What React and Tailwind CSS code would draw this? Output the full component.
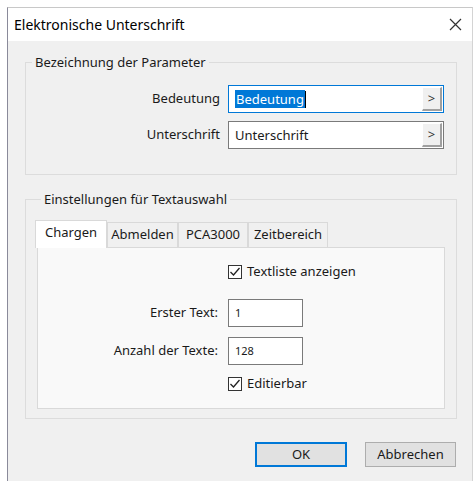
import { useState } from 'react';

const font = { fontFamily: '"Noto Sans", "Open Sans", sans-serif' };

function Check() {
  return (
    <span className="w-[14px] h-[14px] border border-[#333] bg-white flex items-center justify-center">
      <svg width="12" height="12" viewBox="0 0 12 12">
        <polyline points="1.5,6 4.5,9 10.5,2" fill="none" stroke="#222" strokeWidth="1.3" />
      </svg>
    </span>
  );
}

function PickField({ value, focused }) {
  return (
    <div className={`w-[216px] h-[28px] bg-white flex items-center pl-[6px] pr-[1px] border ${focused ? 'border-[#0078d7]' : 'border-[#7a7a7a]'}`}>
      <div className="flex-1 flex items-center">
        {focused ? (
          <>
            <span className="bg-[#0078d7] text-white leading-[18px] px-[1px]">{value}</span>
            <span className="w-px h-[17px] bg-black" />
          </>
        ) : (
          <span className="leading-[18px]">{value}</span>
        )}
      </div>
      <span className="w-[20px] h-[24px] bg-[#f0f0f0] border-t border-l border-white border-r-2 border-b-2 border-r-[#a0a0a0] border-b-[#a0a0a0] flex items-center justify-center text-[13px] text-[#333]">
        &gt;
      </span>
    </div>
  );
}

export default function App() {
  const [tab, setTab] = useState('Chargen');
  const tabs = [
    ['Chargen', 'w-[72px]'],
    ['Abmelden', 'w-[71px]'],
    ['PCA3000', 'w-[70px]'],
    ['Zeitbereich', 'w-[80px]'],
  ];

  return (
    <div className="w-[476px] h-[481px] bg-white pt-[7px] pl-[7px] pr-[3px] text-[13px] text-[#1a1a1a]" style={font}>
      <div className="h-full flex flex-col border-l border-t border-r border-l-[#8a8a9a] border-t-[#c8c8c8] border-r-[#d4d4d4]">
        {/* title bar */}
        <div className="h-[33px] bg-white flex items-center justify-between pl-[6px] pr-[10px]">
          <span className="text-[14px] text-black">Elektronische Unterschrift</span>
          <svg width="13" height="13" viewBox="0 0 13 13">
            <path d="M1 1 L12 12 M12 1 L1 12" stroke="#333" strokeWidth="1.2" />
          </svg>
        </div>

        <div className="flex-1 bg-[#f0f0f0] pl-[17px] pr-[15px] pt-[13px]">
          {/* group 1 */}
          <fieldset className="border border-[#dcdcdc] pl-0 pr-[11px] pt-[14px] pb-[25px]">
            <legend className="ml-[6px] px-[3px] leading-[17px]">Bezeichnung der Parameter</legend>
            <div className="flex flex-col gap-[8px]">
              <div className="flex items-center gap-[8px]">
                <span className="w-[194px] text-right">Bedeutung</span>
                <PickField value="Bedeutung" focused />
              </div>
              <div className="flex items-center gap-[8px]">
                <span className="w-[194px] text-right">Unterschrift</span>
                <PickField value="Unterschrift" />
              </div>
            </div>
          </fieldset>

          {/* group 2 */}
          <fieldset className="mt-[16px] border border-[#dcdcdc] pl-[9px] pr-[11px] pt-[11px] pb-[9px]">
            <legend className="ml-[6px] px-[3px] leading-[17px]">Einstellungen für Textauswahl</legend>
            <div className="flex items-end h-[28px]">
              {tabs.map(([name, w]) => (
                <button
                  key={name}
                  onClick={() => setTab(name)}
                  className={`${w} flex items-center justify-center border-t border-l border-r border-[#d9d9d9] -mr-px ${
                    tab === name ? 'h-[28px] bg-white relative z-10 -mb-px pb-[3px]' : 'h-[25px] bg-[#f0f0f0] ml-px'
                  }`}
                >
                  {name}
                </button>
              ))}
            </div>
            <div className="ml-[2px] h-[162px] border border-[#d9d9d9] bg-[#f9f9f9] pt-[16px]">
              <div className="grid grid-cols-[180px_auto] gap-x-[10px] items-center">
                <span />
                <label className="flex items-center gap-[5px] h-[16px]">
                  <Check />
                  <span>Textliste anzeigen</span>
                </label>

                <span className="text-right mt-[19px]">Erster Text:</span>
                <div className="mt-[19px] w-[75px] h-[28px] bg-white border border-[#7a7a7a] pl-[6px] text-[11px] flex items-center">1</div>

                <span className="text-right mt-[10px]">Anzahl der Texte:</span>
                <div className="mt-[10px] w-[75px] h-[28px] bg-white border border-[#7a7a7a] pl-[6px] text-[11px] flex items-center">128</div>

                <span />
                <label className="mt-[11px] flex items-center gap-[5px] h-[16px]">
                  <Check />
                  <span>Editierbar</span>
                </label>
              </div>
            </div>
          </fieldset>

          {/* dialog buttons */}
          <div className="mt-[23px] flex justify-end gap-[18px] pr-px">
            <button className="w-[92px] h-[25px] bg-[#e1e1e1] border-2 border-[#0078d7]">OK</button>
            <button className="w-[91px] h-[25px] bg-[#e1e1e1] border border-[#adadad]">Abbrechen</button>
          </div>
        </div>
      </div>
    </div>
  );
}
